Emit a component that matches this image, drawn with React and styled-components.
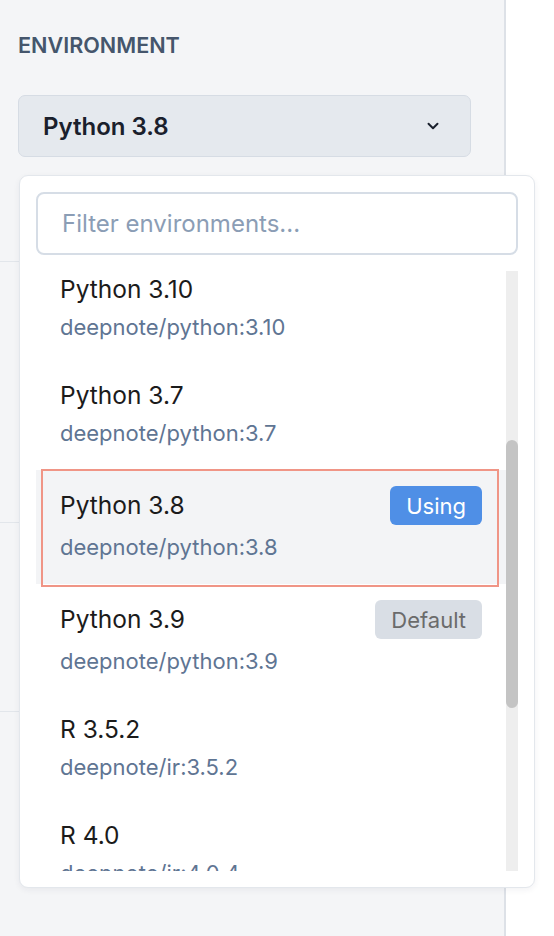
import React, { useLayoutEffect, useRef, useState } from 'react'
import styled, { createGlobalStyle, css } from 'styled-components'
import { ChevronDown } from 'lucide-react'

/* GLOBAL */
const GlobalStyle = createGlobalStyle`
  html, body {
    margin: 0;
    padding: 0;
    background: #ffffff;
  }
  body {
    font-family: Inter, "Noto Sans", sans-serif;
    -webkit-font-smoothing: antialiased;
  }
  * { box-sizing: border-box; }
`

/* WRAPPERS */
const Page = styled.div`
  position: relative;
  display: flex;
  width: 554px;
  height: 936px;
  overflow: hidden;
  background: #ffffff;
`
const SidePanel = styled.aside`
  width: 506px;
  flex-shrink: 0;
  display: flex;
  flex-direction: column;
  background: #f4f5f7;
  border-right: 2px solid #dde1e7;
`
const Section = styled.section`
  height: ${p => (p.$h ? `${p.$h}px` : 'auto')};
  flex: ${p => (p.$h ? '0 0 auto' : '1')};
  padding: 31px 33px 0 18px;
  border-bottom: ${p => (p.$last ? 'none' : '1px solid #e2e6eb')};
`
const SectionTitle = styled.h3`
  margin: 0 0 36px;
  font-size: 21.6px;
  line-height: 28px;
  font-weight: 600;
  color: #45566c;
`
const SelectButton = styled.button`
  display: flex;
  align-items: center;
  justify-content: space-between;
  width: 100%;
  height: 62px;
  padding: 0 28px 0 24px;
  background: #e5e9ee;
  border: 1.5px solid #d6dce4;
  border-radius: 7px;
  font-family: inherit;
  font-size: 24px;
  font-weight: 600;
  color: #1a202c;
  cursor: pointer;
`

/* DROPDOWN */
const Dropdown = styled.div`
  position: absolute;
  left: 19px;
  top: 175px;
  width: 516px;
  height: 713px;
  display: flex;
  flex-direction: column;
  gap: 16px;
  padding: 16px;
  background: #ffffff;
  border: 1px solid #e3e7ec;
  border-radius: 9px;
  box-shadow: 0 2px 6px rgba(30, 40, 60, 0.06);
`
const FilterInput = styled.input`
  flex-shrink: 0;
  width: 100%;
  height: 63px;
  padding: 0 24px;
  border: 2px solid #d6dde6;
  border-radius: 8px;
  font-family: inherit;
  font-size: 24px;
  color: #1a1a1a;
  outline: none;
  &::placeholder { color: #8b9db5; }
`
const ListArea = styled.div`
  flex: 1;
  min-height: 0;
  display: flex;
`
const ListViewport = styled.div`
  flex: 1;
  min-width: 0;
  overflow: hidden;
  padding: 48px 0 7px;
`
const ScrollTrack = styled.div`
  flex: 0 0 12px;
  display: flex;
  flex-direction: column;
  background: #eeeeee;
`
const ScrollThumb = styled.div`
  width: 12px;
  background: #c4c4c4;
  border-radius: 6px;
`
const Item = styled.div`
  position: relative;
  padding: 16px 24px 22px;
  background: ${p => (p.$active ? '#f3f4f6' : 'transparent')};
  ${p => p.$active && css`
    &::after {
      content: '';
      position: absolute;
      top: -1px;
      bottom: -3px;
      left: 5px;
      right: 7px;
      border: 2px solid #f09586;
      pointer-events: none;
    }
  `}
`
const TitleRow = styled.div`
  display: flex;
  align-items: center;
  justify-content: space-between;
  min-height: 31px;
`
const ItemTitle = styled.span`
  font-size: 24.5px;
  line-height: 31px;
  font-weight: 400;
  color: #1b1b1b;
`
const ItemImage = styled.div`
  margin-top: 8px;
  font-size: 22px;
  line-height: 29px;
  color: #5f7593;
`
const Badge = styled.span`
  display: inline-flex;
  align-items: center;
  height: 39px;
  padding: 0 16px;
  border-radius: 6px;
  font-size: 22px;
  font-weight: 400;
  background: ${p => (p.$kind === 'using' ? '#4f8fe6' : '#d9dee5')};
  color: ${p => (p.$kind === 'using' ? '#ffffff' : '#6b6b6b')};
`

const environments = [
  { name: 'Julia 1.6', image: 'deepnote/julia:1.6' },
  { name: 'Python 3.11', image: 'deepnote/python:3.11' },
  { name: 'Python 3.12', image: 'deepnote/python:3.12' },
  { name: 'Python 3.10', image: 'deepnote/python:3.10' },
  { name: 'Python 3.7', image: 'deepnote/python:3.7' },
  { name: 'Python 3.8', image: 'deepnote/python:3.8', badge: 'using' },
  { name: 'Python 3.9', image: 'deepnote/python:3.9', badge: 'default' },
  { name: 'R 3.5.2', image: 'deepnote/ir:3.5.2' },
  { name: 'R 4.0', image: 'deepnote/ir:4.0.4' },
  { name: 'R 4.2', image: 'deepnote/ir:4.2.0' },
  { name: 'R 4.3', image: 'deepnote/ir:4.3.1' },
  { name: 'Scala 2.12', image: 'deepnote/scala:2.12' },
]

const App = () => {
  const listRef = useRef(null)
  const [thumb, setThumb] = useState({ top: 170, height: 269 })

  /* SCROLL THE LIST TO THE CURRENT ENVIRONMENT AND SIZE THE THUMB */
  useLayoutEffect(() => {
    const el = listRef.current
    if (!el) return
    el.scrollTop = 379
    const ratio = el.clientHeight / el.scrollHeight
    setThumb({
      top: Math.round(el.scrollTop * ratio),
      height: Math.round(el.clientHeight * ratio),
    })
  }, [])

  return (
    <Page>
      <GlobalStyle />
      <SidePanel>
        <Section $h={262}>
          <SectionTitle>ENVIRONMENT</SectionTitle>
          <SelectButton>
            Python 3.8
            <ChevronDown size={18} strokeWidth={2.6} color="#1a202c" />
          </SelectButton>
        </Section>
        <Section $h={261} />
        <Section $h={189} />
        <Section $last />
      </SidePanel>

      {/* ENVIRONMENT PICKER */}
      <Dropdown>
        <FilterInput placeholder="Filter environments..." />
        <ListArea>
          <ListViewport ref={listRef}>
            {environments.map(env => (
              <Item key={env.name} $active={env.badge === 'using'}>
                <TitleRow>
                  <ItemTitle>{env.name}</ItemTitle>
                  {env.badge && (
                    <Badge $kind={env.badge}>{env.badge === 'using' ? 'Using' : 'Default'}</Badge>
                  )}
                </TitleRow>
                <ItemImage>{env.image}</ItemImage>
              </Item>
            ))}
          </ListViewport>
          <ScrollTrack>
            <ScrollThumb style={{ marginTop: thumb.top, height: thumb.height }} />
          </ScrollTrack>
        </ListArea>
      </Dropdown>
    </Page>
  )
}

export default App
